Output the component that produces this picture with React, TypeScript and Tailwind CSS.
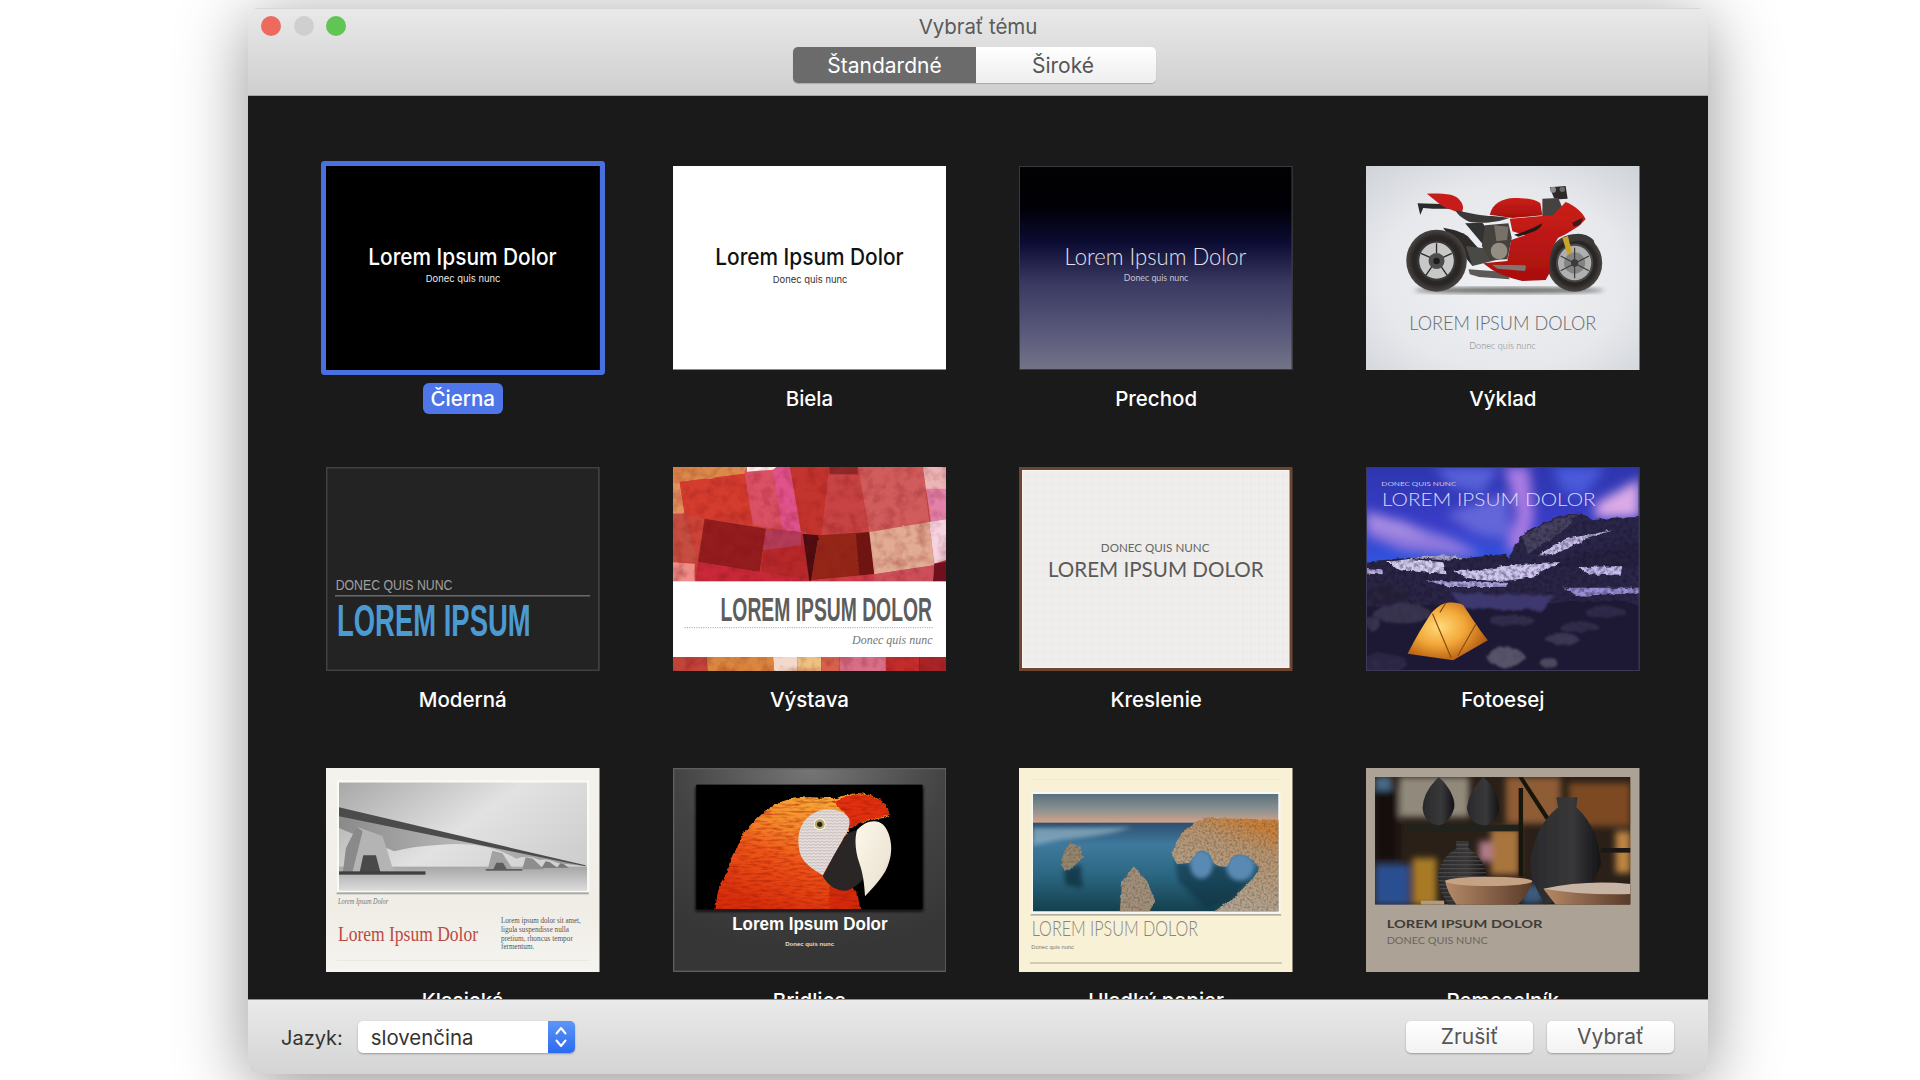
import React, { useLayoutEffect, useRef } from "react";

const VB = "0 0 822 612";
const SANS = "'Liberation Sans', Arial, sans-serif";
const INTER = "Inter, 'Liberation Sans', sans-serif";
const SERIF = "'Liberation Serif', serif";
const LATO = "Lato, 'Liberation Sans', sans-serif";

type TP = { x: number; y: number; w: number; s: number; f: string; ff?: string; fw?: number | string; it?: boolean; children: string };
/* slide text: squeezed horizontally at run time so that it spans the measured width of the original */
function T({ x, y, w, s, f, ff = SANS, fw = 400, it, children }: TP) {
  const ref = useRef<SVGTextElement>(null);
  useLayoutEffect(() => {
    const el = ref.current;
    if (!el) return;
    const n = el.getComputedTextLength();
    el.setAttribute("transform", `translate(${x} ${y}) scale(${w / n} 1)`);
  }, [x, y, w]);
  return (
    <text ref={ref} transform={`translate(${x} ${y})`} fontSize={s} fill={f} fontFamily={ff} fontWeight={fw} fontStyle={it ? "italic" : "normal"}>
      {children}
    </text>
  );
}

function Svg({ children }: { children: React.ReactNode }) {
  return (
    <svg viewBox={VB} preserveAspectRatio="none" className="block w-full h-full">
      {children}
    </svg>
  );
}

function Blur({ id, d }: { id: string; d: number }) {
  return (
    <filter id={id} x="-20%" y="-20%" width="140%" height="140%">
      <feGaussianBlur stdDeviation={d} />
    </filter>
  );
}

/* rough edges + mottled spots + softening, for the photographic parts */
type RP = { id: string; f1?: string; s?: number; f2?: string; rgb?: [number, number, number]; k?: number; off?: number; b?: number; seed?: number };
function Rough({ id, f1 = "0.035", s = 10, f2 = "0.06", rgb = [0, 0, 0], k = 1.5, off = -0.6, b = 1.2, seed = 3 }: RP) {
  return (
    <filter id={id} x="-5%" y="-5%" width="110%" height="110%" colorInterpolationFilters="sRGB">
      <feTurbulence type="fractalNoise" baseFrequency={f1} numOctaves={3} seed={seed} result="n1" />
      <feDisplacementMap in="SourceGraphic" in2="n1" scale={s} xChannelSelector="R" yChannelSelector="G" result="d" />
      <feTurbulence type="fractalNoise" baseFrequency={f2} numOctaves={3} seed={seed + 5} result="n2" />
      <feColorMatrix in="n2" values={`0 0 0 0 ${rgb[0]}  0 0 0 0 ${rgb[1]}  0 0 0 0 ${rgb[2]}  0 0 0 ${k} ${off}`} result="sp" />
      <feComposite in="sp" in2="d" operator="in" result="c" />
      <feMerge result="m">
        <feMergeNode in="d" />
        <feMergeNode in="c" />
      </feMerge>
      <feGaussianBlur in="m" stdDeviation={b} />
    </filter>
  );
}

function Cierna() {
  return (
    <Svg>
      <rect width="822" height="612" fill="#000" />
      <T x={127} y={297} w={566} s={68} f="#fff" ff={INTER} fw={500}>Lorem Ipsum Dolor</T>
      <T x={300} y={347} w={224} s={28} f="#e8e8e8" ff={INTER}>Donec quis nunc</T>
    </Svg>
  );
}

function Biela() {
  return (
    <Svg>
      <rect width="822" height="612" fill="#fff" />
      <rect y="609" width="822" height="3" fill="#8a8a8a" />
      <T x={127} y={297} w={566} s={68} f="#111" ff={INTER} fw={500}>Lorem Ipsum Dolor</T>
      <T x={300} y={352} w={224} s={28} f="#333" ff={INTER}>Donec quis nunc</T>
    </Svg>
  );
}

function Prechod() {
  return (
    <Svg>
      <defs>
        <linearGradient id="pg" x1="0" y1="0" x2="0" y2="1">
          <stop offset="0" stopColor="#020204" />
          <stop offset="0.2" stopColor="#000006" />
          <stop offset="0.38" stopColor="#0c0c34" />
          <stop offset="0.58" stopColor="#3a3a62" />
          <stop offset="0.8" stopColor="#57577a" />
          <stop offset="1" stopColor="#747488" />
        </linearGradient>
      </defs>
      <rect width="822" height="612" fill="url(#pg)" />
      <rect x="1" y="1" width="820" height="610" fill="none" stroke="#3a3a3e" strokeWidth="4" />
      <T x={137} y={297} w={546} s={68} f="#e2e2ea" ff={LATO} fw={300}>Lorem Ipsum Dolor</T>
      <T x={315} y={346} w={194} s={27} f="#c4c4d2" ff={LATO} fw={400}>Donec quis nunc</T>
    </Svg>
  );
}

function Vyklad() {
  return (
    <Svg>
      <defs>
        <radialGradient id="vg" cx="0.5" cy="0.55" r="0.75">
          <stop offset="0" stopColor="#f0f1f4" />
          <stop offset="0.6" stopColor="#e6e8ec" />
          <stop offset="1" stopColor="#cfd2d7" />
        </radialGradient>
        <linearGradient id="vr" x1="0" y1="0" x2="0" y2="1">
          <stop offset="0" stopColor="#cc1f1a" />
          <stop offset="1" stopColor="#a80f0e" />
        </linearGradient>
        <radialGradient id="vt" cx="0.5" cy="0.5" r="0.5">
          <stop offset="0" stopColor="#3c3837" />
          <stop offset="0.78" stopColor="#2a2625" />
          <stop offset="1" stopColor="#4a4644" />
        </radialGradient>
        <Blur id="vb1" d={7} />
        <Blur id="vb2" d={1.7} />
      </defs>
      <rect width="822" height="612" fill="url(#vg)" />
      <ellipse cx="430" cy="373" rx="285" ry="9" fill="#666" filter="url(#vb1)" />
      <g filter="url(#vb2)">
        <path d="M155 112 L225 114 L262 128 L200 128 L172 126 L163 147 Z" fill="#2a2a2a" />
        <path d="M232 185 C262 190 290 198 305 210 L345 255 L320 300 L262 230 Z" fill="#2e2b29" />
        <path d="M298 172 L350 170 L395 230 L360 245 Z" fill="#333130" />
        <path d="M300 240 L380 250 L400 280 L320 300 Z" fill="#4a4844" />
        <ellipse cx="212" cy="284" rx="91" ry="93" fill="url(#vt)" />
        <ellipse cx="212" cy="284" rx="58" ry="60" fill="#3a3838" />
        <ellipse cx="212" cy="284" rx="52" ry="54" fill="#c8c8c8" />
        <g stroke="#2c2c2c" strokeWidth="4">
          <line x1="212" y1="232" x2="212" y2="262" />
          <line x1="165" y1="262" x2="194" y2="275" />
          <line x1="258" y1="262" x2="230" y2="275" />
          <line x1="180" y1="328" x2="198" y2="302" />
          <line x1="244" y1="328" x2="226" y2="302" />
        </g>
        <circle cx="212" cy="285" r="24" fill="#4e4e4e" />
        <circle cx="212" cy="285" r="10" fill="#1e1e1e" />
        <ellipse cx="627" cy="291" rx="83" ry="86" fill="url(#vt)" />
        <ellipse cx="627" cy="291" rx="56" ry="58" fill="#484646" />
        <ellipse cx="627" cy="291" rx="50" ry="52" fill="#b0b0b0" />
        <circle cx="627" cy="291" r="32" fill="#848484" />
        <g stroke="#3a3a3a" strokeWidth="3.5">
          <line x1="627" y1="245" x2="627" y2="337" />
          <line x1="585" y1="270" x2="670" y2="314" />
          <line x1="585" y1="314" x2="670" y2="270" />
        </g>
        <circle cx="627" cy="291" r="11" fill="#3a3a3a" />
        <path d="M600 212 Q650 190 684 222 L692 250 Q660 215 615 228 Z" fill="#3a3838" />
        <path d="M590 215 L607 210 L620 262 L606 266 Z" fill="#c9a42c" />
        <path d="M308 310 L420 318 L432 340 L340 333 L312 325 Z" fill="#5c5a58" />
        <path d="M552 64 L600 60 L606 98 L580 100 L565 96 Z" fill="#2e2c2c" />
        <circle cx="562" cy="71" r="9" fill="#8e8e8e" />
        <circle cx="590" cy="70" r="8" fill="#6a6a6a" />
        <path d="M530 98 L578 96 L590 125 L570 152 L530 150 Z" fill="#454240" />
        <path d="M183 83 C210 82 235 83 255 86 C278 92 290 108 292 125 L288 142 C255 132 235 125 222 115 Z" fill="#c81f1a" />
        <path d="M268 132 C310 142 350 150 380 150 L432 155 C390 172 340 172 310 167 C285 155 275 145 268 132 Z" fill="#3c3937" />
        <path d="M372 146 C380 112 410 97 445 96 C485 96 510 100 524 112 L530 148 L440 156 Z" fill="url(#vr)" />
        <path d="M432 158 L528 150 L562 148 L600 108 C630 120 652 140 660 160 L640 180 L600 205 L578 215 C560 240 552 262 552 300 L552 320 L540 342 L470 345 C430 335 400 325 380 312 L352 292 L425 285 L436 222 L478 208 L440 196 Z" fill="url(#vr)" />
        <path d="M445 206 Q490 195 530 172 Q525 190 500 198 L458 212 Z" fill="#1f1a1a" />
        <path d="M620 170 L652 155 L645 175 L625 182 Z" fill="#3a1a1a" />
        <path d="M358 178 L428 172 L438 215 L425 280 L372 282 L348 240 Z" fill="#45423e" />
        <circle cx="400" cy="255" r="25" fill="#948e82" />
        <path d="M385 178 L428 182 L424 222 L392 226 Z" fill="#77716a" />
        <path d="M378 296 L482 298 L478 315 L395 308 Z" fill="#807470" />
      </g>
      <T x={130} y={493} w={562} s={58} f="#66686c" ff={LATO} fw={300}>LOREM IPSUM DOLOR</T>
      <T x={310} y={549} w={200} s={28} f="#808286" ff={LATO} fw={300}>Donec quis nunc</T>
    </Svg>
  );
}

function Moderna() {
  return (
    <Svg>
      <rect width="822" height="612" fill="#232323" />
      <rect x="2" y="2" width="818" height="608" fill="none" stroke="#414141" strokeWidth="5" />
      <T x={29} y={370} w={351} s={46} f="#a0a0a0">DONEC QUIS NUNC</T>
      <rect x="27" y="385" width="767" height="3" fill="#8d8d8d" />
      <T x={33} y={507} w={582} s={132} f="#4b9ad2" fw={700}>LOREM IPSUM</T>
    </Svg>
  );
}

function Vystava() {
  const P = (pts: string, fill: string) => <polygon points={pts} fill={fill} />;
  return (
    <Svg>
      <defs>
        <Rough id="sb" f1="0.02" s={5} f2="0.03" rgb={[0.5, 0.06, 0.08]} k={0.7} off={-0.3} b={1.8} />
      </defs>
      <g filter="url(#sb)">
        <rect x="-10" y="-10" width="842" height="370" fill="#cc4438" />
        {P("-10,-10 225,-10 215,20 20,45 -10,50", "#dc8a4c")}
        {P("-10,50 20,45 35,140 -10,140", "#e2925e")}
        {P("20,45 215,20 240,175 95,155 35,140", "#d43c2e")}
        {P("215,10 350,-10 385,195 240,175", "#da5064")}
        {P("300,8 350,-10 385,195 330,190", "#e0528c")}
        {P("350,-10 470,-10 470,20 445,205 385,195", "#c4342e")}
        {P("470,-10 555,-10 555,15 590,195 445,220", "#c84444")}
        {P("470,-10 555,-10 555,22 470,22", "#8e2a2a")}
        {P("555,-10 750,-10 770,165 590,195", "#d05c5c")}
        {P("750,-10 832,-10 832,155 775,165", "#e282aa")}
        {P("750,-10 832,5 832,65 760,65", "#ecb6b6")}
        {P("222,-10 325,-10 300,8 222,14", "#f8f0e8")}
        {P("-10,140 35,140 75,285 -10,285", "#c64e40")}
        {P("95,155 280,185 260,315 75,285", "#921c1e")}
        {P("280,185 390,200 410,340 262,315", "#b6282a")}
        {P("280,185 385,195 385,235 270,250", "#b23c58")}
        {P("390,200 438,205 415,345 410,345", "#4a0c10")}
        {P("438,205 590,195 605,322 415,340", "#942618")}
        {P("550,200 590,195 605,320 560,325", "#6e1512")}
        {P("590,195 770,165 785,295 605,322", "#e2ac94")}
        {P("770,165 832,155 832,275 785,290", "#f4d4e0")}
        {P("785,290 832,282 832,360 780,360", "#701020")}
        {P("605,322 785,295 780,360 600,360", "#cc505c")}
        {P("-10,285 65,290 65,360 -10,360", "#ee8f88")}
        {P("75,285 260,315 410,340 410,360 65,360", "#c8283a")}
        {P("415,340 605,322 600,360 410,360", "#d03c4a")}
        {P("-10,565 100,565 105,622 -10,622", "#c2453a")}
        {P("100,565 300,565 305,622 105,622", "#d9873f")}
        {P("300,565 375,565 375,622 305,622", "#f2d9c9")}
        {P("375,565 445,565 445,622 375,622", "#edc180")}
        {P("445,565 500,565 500,622 445,622", "#d5634c")}
        {P("500,565 640,565 640,622 500,622", "#d9708a")}
        {P("640,565 740,565 740,622 640,622", "#c22c2c")}
        {P("740,565 832,565 832,622 740,622", "#a82426")}
      </g>
      <rect y="343" width="822" height="227" fill="#fff" />
      <T x={143} y={462} w={635} s={98} f="#5d5d5d" fw={700}>LOREM IPSUM DOLOR</T>
      <line x1="35" y1="482" x2="782" y2="482" stroke="#9a9a9a" strokeWidth="3" strokeDasharray="3 4" />
      <T x={538} y={530} w={242} s={38} f="#77777a" ff={SERIF} it>Donec quis nunc</T>
    </Svg>
  );
}

function Kreslenie() {
  return (
    <Svg>
      <defs>
        <pattern id="kp" width="24" height="24" patternUnits="userSpaceOnUse">
          <path d="M24 0H0V24" fill="none" stroke="#e2e0dc" strokeWidth="1.5" />
        </pattern>
      </defs>
      <rect width="822" height="612" fill="#6d4632" />
      <rect x="9" y="9" width="804" height="594" fill="#f6f5f1" />
      <rect x="12" y="12" width="798" height="588" fill="#efeeec" />
      <rect x="12" y="12" width="798" height="588" fill="url(#kp)" />
      <T x={246} y={254} w={326} s={33} f="#666664" ff={LATO}>DONEC QUIS NUNC</T>
      <T x={87} y={331} w={648} s={62} f="#5a5a58" ff={LATO}>LOREM IPSUM DOLOR</T>
    </Svg>
  );
}

function Fotoesej() {
  const P = (d: string, fill: string) => <path d={d} fill={fill} />;
  return (
    <Svg>
      <defs>
        <linearGradient id="fs" x1="0" y1="0" x2="0" y2="1">
          <stop offset="0" stopColor="#2d36ae" />
          <stop offset="0.6" stopColor="#3a3dc8" />
          <stop offset="1" stopColor="#2f55df" />
        </linearGradient>
        <radialGradient id="ft" cx="0.4" cy="0.42" r="0.62">
          <stop offset="0" stopColor="#ffdb7c" />
          <stop offset="0.5" stopColor="#f2a838" />
          <stop offset="1" stopColor="#b45a12" />
        </radialGradient>
        <Blur id="f1" d={16} />
        <Blur id="f3" d={2} />
        <Rough id="f2" f1="0.05" s={14} f2="0.08" rgb={[0.09, 0.07, 0.18]} k={1.2} off={-0.48} b={1.3} />
        <Rough id="f4" f1="0.03" s={18} f2="0.05" rgb={[0.26, 0.24, 0.38]} k={0.8} off={-0.34} b={3} />
      </defs>
      <rect width="822" height="290" fill="url(#fs)" />
      <g filter="url(#f1)">
        {P("M0 130 L260 215 L345 262 L290 268 L110 250 L0 205 Z", "#8f78de")}
        {P("M0 140 L120 165 L190 215 L90 200 L0 175 Z", "#a88ee2")}
        {P("M415 0 L490 0 L505 150 L480 245 L420 255 L455 140 Z", "#a97ce2")}
        {P("M205 0 L400 0 L350 80 L260 60 Z", "#5660d8")}
        {P("M690 110 L822 35 L822 150 L690 152 Z", "#dcaae6")}
        {P("M560 0 L720 0 L650 90 L590 70 Z", "#4a5ada")}
        {P("M240 140 L420 80 L440 220 L330 200 Z", "#6466d8")}
      </g>
      <rect x="0" y="290" width="822" height="322" fill="#1d1934" />
      <g filter="url(#f2)">
        <path d="M435 262 C450 235 465 205 490 190 C530 170 570 150 610 142 L645 140 L682 160 L740 152 L830 150 L830 420 L430 300 Z" fill="#2a2648" />
        <path d="M470 210 C520 175 570 152 640 142 L600 185 L530 235 L485 262 Z" fill="#47425f" />
        {P("M-10 285 L130 272 L220 265 L310 272 L420 260 L445 290 L600 290 L830 400 L-10 420 Z", "#2a2445")}
        {P("M530 300 C600 270 700 240 830 225 L830 300 L700 300 Z", "#26213f")}
        {P("M60 285 L130 276 L232 286 L242 322 L100 310 Z", "#d4cef0")}
        {P("M130 272 L230 264 L310 272 L230 280 Z", "#a8a4ca")}
        {P("M262 312 L330 292 L440 292 L585 285 L500 330 L400 345 L300 332 Z", "#d0c8f0")}
        {P("M250 282 L420 264 L445 290 L340 312 L280 304 Z", "#2a2544")}
        {P("M520 262 L600 216 L742 190 L660 216 L565 262 Z", "#c8c0ea")}
        {P("M640 300 L770 298 L765 326 L670 322 Z", "#c4bcee")}
        {P("M-10 305 L50 310 L50 322 L-10 320 Z", "#b8b0dc")}
        {P("M180 340 L430 350 L420 360 L250 360 Z", "#aea6de")}
        {P("M590 362 L830 362 L830 378 L640 386 Z", "#9890d4")}
      </g>
      <g filter="url(#f4)">
        {P("M250 378 L565 384 L530 432 L300 424 Z", "#3d3870")}
        <ellipse cx="110" cy="440" rx="85" ry="30" fill="#37324c" />
        <ellipse cx="60" cy="385" rx="70" ry="28" fill="#231e35" />
        <ellipse cx="590" cy="515" rx="50" ry="18" fill="#3a3652" />
        <ellipse cx="640" cy="480" rx="60" ry="15" fill="#2e2a48" />
        <ellipse cx="720" cy="435" rx="60" ry="16" fill="#2c2846" />
        <ellipse cx="420" cy="570" rx="55" ry="32" fill="#575368" />
        <ellipse cx="440" cy="460" rx="70" ry="16" fill="#2f2b48" />
        <ellipse cx="550" cy="590" rx="22" ry="14" fill="#4c485e" />
        <ellipse cx="45" cy="590" rx="80" ry="30" fill="#2a2542" />
        <ellipse cx="20" cy="470" rx="22" ry="20" fill="#35304a" />
      </g>
      <g filter="url(#f3)">
        <path d="M125 560 C150 510 175 470 195 440 C210 422 225 410 245 407 C265 405 282 408 292 414 C310 440 335 480 366 520 L262 580 Z" fill="url(#ft)" />
        <path d="M200 440 L256 572 M330 472 L276 566 M240 408 L222 436" stroke="#8a4a12" strokeWidth="3.5" fill="none" />
      </g>
      <T x={46} y={56} w={225} s={19} f="#c6c6ee" ff={LATO}>DONEC QUIS NUNC</T>
      <T x={48} y={117} w={642} s={50} f="#dcdcf2" ff={LATO} fw={300}>LOREM IPSUM DOLOR</T>
      <rect x="1" y="1" width="820" height="610" fill="none" stroke="#3a3a58" strokeWidth="4" />
    </Svg>
  );
}

function Klasicka() {
  return (
    <Svg>
      <defs>
        <linearGradient id="ks" x1="0" y1="0" x2="1" y2="0.6">
          <stop offset="0" stopColor="#a8a8a8" />
          <stop offset="0.55" stopColor="#e2e2e2" />
          <stop offset="1" stopColor="#cfcfcf" />
        </linearGradient>
        <linearGradient id="kw" x1="0" y1="0" x2="0" y2="1">
          <stop offset="0" stopColor="#a6a6a6" />
          <stop offset="1" stopColor="#dcdcdc" />
        </linearGradient>
        <linearGradient id="kb" x1="0" y1="0" x2="1" y2="0">
          <stop offset="0" stopColor="#8a8a8a" />
          <stop offset="0.55" stopColor="#bcbcbc" />
          <stop offset="1" stopColor="#8e8e8e" />
        </linearGradient>
        <linearGradient id="kbg" x1="0" y1="0" x2="0" y2="1">
          <stop offset="0" stopColor="#f4f2ed" />
          <stop offset="0.7" stopColor="#f0ede7" />
          <stop offset="1" stopColor="#f6f4ef" />
        </linearGradient>
        <clipPath id="kc"><rect x="39" y="43" width="746" height="325" /></clipPath>
        <Blur id="kb1" d={1.6} />
      </defs>
      <rect width="822" height="612" fill="url(#kbg)" />
      <rect x="33" y="37" width="758" height="337" fill="#fbfaf7" />
      <rect x="32" y="373" width="758" height="6" fill="#a9a8a4" />
      <g clipPath="url(#kc)">
        <rect x="39" y="43" width="746" height="325" fill="url(#ks)" />
        <rect x="39" y="296" width="746" height="72" fill="url(#kw)" />
        <g filter="url(#kb1)">
          <path d="M39 135 L780 294 L700 286 Q665 270 642 276 Q605 258 572 272 Q480 218 345 230 Q262 234 205 250 L39 180 Z" fill="url(#kb)" />
          <path d="M39 118 L780 292 L780 295 L39 145 Z" fill="#4c4c4c" />
          <path d="M92 176 L170 204 L206 318 L50 318 Z" fill="#b4b4b4" />
          <path d="M60 240 L92 176 L110 190 L78 318 L50 318 Z" fill="#8a8a8a" />
          <path d="M112 262 L150 262 L165 318 L100 318 Z" fill="#484848" />
          <path d="M500 248 L530 256 L565 308 L485 308 Z" fill="#a2a2a2" />
          <path d="M512 284 L532 284 L545 306 L502 306 Z" fill="#5c5c5c" />
          <path d="M600 268 L622 272 L655 304 L590 304 Z" fill="#8e8e8e" />
          <path d="M660 280 L672 282 L696 300 L648 300 Z" fill="#7c7c7c" />
          <path d="M704 286 L714 288 L730 299 L695 299 Z" fill="#777" />
          <rect x="39" y="310" width="260" height="10" fill="#404040" />
          <rect x="480" y="303" width="110" height="5" fill="#5c5c5c" />
        </g>
      </g>
      <T x={36} y={408} w={151} s={22} f="#777" ff={SERIF} it>Lorem Ipsum Dolor</T>
      <T x={36} y={518} w={421} s={66} f="#b84c42" ff={SERIF}>Lorem Ipsum Dolor</T>
      <T x={526} y={466} w={240} s={22} f="#555" ff={SERIF}>Lorem ipsum dolor sit amet,</T>
      <T x={526} y={493} w={204} s={22} f="#555" ff={SERIF}>ligula suspendisse nulla</T>
      <T x={526} y={519} w={216} s={22} f="#555" ff={SERIF}>pretium, rhoncus tempor</T>
      <T x={526} y={544} w={100} s={22} f="#555" ff={SERIF}>fermentum.</T>
      <rect x="32" y="576" width="762" height="2" fill="#e8e5df" />
    </Svg>
  );
}

function Bridlica() {
  return (
    <Svg>
      <defs>
        <radialGradient id="bg" cx="0.5" cy="0" r="0.9">
          <stop offset="0" stopColor="#767676" />
          <stop offset="0.55" stopColor="#434343" />
          <stop offset="1" stopColor="#363636" />
        </radialGradient>
        <linearGradient id="bo" gradientUnits="userSpaceOnUse" x1="400" y1="90" x2="300" y2="424">
          <stop offset="0" stopColor="#f7a636" />
          <stop offset="0.3" stopColor="#f5862a" />
          <stop offset="0.55" stopColor="#ee5518" />
          <stop offset="1" stopColor="#d92e0c" />
        </linearGradient>
        <linearGradient id="bk" x1="0" y1="0" x2="1" y2="1">
          <stop offset="0" stopColor="#fdf8ec" />
          <stop offset="0.7" stopColor="#eee6d6" />
          <stop offset="1" stopColor="#b8b2a4" />
        </linearGradient>
        <pattern id="bp" width="13" height="9" patternUnits="userSpaceOnUse">
          <path d="M0 7 Q6.5 0 13 7" fill="none" stroke="#988886" strokeWidth="2" />
        </pattern>
        <Rough id="br" f1="0.07" s={14} f2="0.03 0.14" rgb={[0.62, 0.1, 0.02]} k={1.2} off={-0.5} b={1.6} />
        <Blur id="b1" d={1.2} />
        <Blur id="bs" d={5} />
        <clipPath id="bc"><rect x="70" y="50" width="680" height="374" /></clipPath>
      </defs>
      <rect width="822" height="612" fill="url(#bg)" />
      <rect x="2" y="2" width="818" height="608" fill="none" stroke="#5f5f5f" strokeWidth="4" />
      <rect x="68" y="56" width="684" height="374" fill="#111" filter="url(#bs)" />
      <rect x="70" y="50" width="680" height="374" fill="#000" />
      <g clipPath="url(#bc)">
        <g filter="url(#br)">
          <path d="M125 440 C135 385 130 350 165 315 C165 280 195 240 215 190 C250 150 290 115 330 100 C380 80 450 90 490 90 C530 78 560 68 600 85 C635 100 650 120 648 140 C640 155 600 150 575 160 C545 170 530 185 520 200 L470 340 L560 440 Z" fill="url(#bo)" />
          <path d="M480 100 C520 85 560 68 605 88 C640 100 652 125 645 142 C620 155 590 150 570 160 C550 170 535 180 525 190 C530 150 510 120 480 100 Z" fill="#e2300f" />
          <path d="M470 340 C500 365 540 360 553 365 L565 440 L470 440 Z" fill="#d42a0c" />
        </g>
        <g filter="url(#b1)">
          <path d="M378 200 C385 160 410 135 450 125 C490 120 525 135 530 155 C532 175 525 190 515 205 C495 245 470 285 450 322 C420 305 395 285 385 265 C378 245 375 225 378 200 Z" fill="#e6dedd" />
          <path d="M378 200 C385 160 410 135 450 125 C490 120 525 135 530 155 C532 175 525 190 515 205 C495 245 470 285 450 322 C420 305 395 285 385 265 C378 245 375 225 378 200 Z" fill="url(#bp)" opacity="0.6" />
          <path d="M520 200 C535 190 550 187 556 186 C548 215 555 260 578 312 C575 335 560 350 530 365 C505 375 470 360 450 325 C470 285 495 240 520 200 Z" fill="#2a2828" />
          <path d="M553 186 C575 160 610 150 632 170 C655 195 662 240 650 280 C640 320 610 350 577 385 C575 350 572 320 560 285 C548 250 545 215 553 186 Z" fill="url(#bk)" />
          <circle cx="441" cy="169" r="18" fill="#fff8e8" />
          <circle cx="441" cy="169" r="15" fill="#b8a868" />
          <circle cx="441" cy="169" r="8" fill="#2a2418" />
        </g>
      </g>
      <T x={178} y={487} w={467} s={54} f="#fff" fw={700}>Lorem Ipsum Dolor</T>
      <T x={337} y={533} w={147} s={18} f="#dedede" fw={700}>Donec quis nunc</T>
    </Svg>
  );
}

function Papier() {
  return (
    <Svg>
      <defs>
        <linearGradient id="hs" x1="0" y1="0" x2="0" y2="1">
          <stop offset="0" stopColor="#59717f" />
          <stop offset="0.55" stopColor="#8d9291" />
          <stop offset="1" stopColor="#d8a488" />
        </linearGradient>
        <linearGradient id="hw" x1="0" y1="0" x2="0" y2="1">
          <stop offset="0" stopColor="#2d4f70" />
          <stop offset="0.25" stopColor="#3f7a9e" />
          <stop offset="0.6" stopColor="#2a6580" />
          <stop offset="1" stopColor="#143f4c" />
        </linearGradient>
        <linearGradient id="hc" gradientUnits="userSpaceOnUse" x1="660" y1="150" x2="570" y2="400">
          <stop offset="0" stopColor="#c8803a" />
          <stop offset="0.28" stopColor="#b69470" />
          <stop offset="1" stopColor="#b2a694" />
        </linearGradient>
        <clipPath id="hcp"><rect x="42" y="78" width="738" height="352" /></clipPath>
        <Rough id="hb" f1="0.05" s={8} f2="0.14" rgb={[0.28, 0.22, 0.16]} k={1} off={-0.42} b={1.1} />
        <Blur id="hb2" d={6} />
      </defs>
      <rect width="822" height="612" fill="#f8f1d6" />
      <rect x="38" y="34" width="746" height="2" fill="#f0e8cc" />
      <rect x="38" y="72" width="748" height="364" fill="#f8f8f2" />
      <g clipPath="url(#hcp)">
        <rect x="42" y="78" width="738" height="88" fill="url(#hs)" />
        <rect x="42" y="164" width="738" height="268" fill="url(#hw)" />
        <path d="M42 180 L340 178 Q260 205 130 215 L42 232 Z" fill="#9cbccb" opacity="0.65" filter="url(#hb2)" />
        <path d="M135 305 L185 290 L190 360 L140 350 Z" fill="#0c2c38" opacity="0.7" filter="url(#hb2)" />
        <path d="M470 285 L720 300 L640 400 L560 420 L480 340 Z" fill="#0c2e3c" opacity="0.55" filter="url(#hb2)" />
        <ellipse cx="548" cy="290" rx="34" ry="42" fill="#5a8ab4" filter="url(#hb2)" />
        <ellipse cx="665" cy="298" rx="42" ry="40" fill="#5a8ab4" filter="url(#hb2)" />
        <g filter="url(#hb)">
          <path d="M460 262 C462 240 480 200 510 178 C530 160 550 150 570 150 L790 156 L790 440 L570 440 C600 420 640 400 660 375 C690 345 715 320 722 300 C700 265 670 248 640 268 L625 295 L612 296 C590 296 580 280 578 268 C565 240 535 240 522 270 L510 285 L475 288 Z" fill="url(#hc)" />
          <path d="M128 270 L150 225 L185 235 L192 270 L160 300 L132 308 Z" fill="#96866e" />
          <path d="M302 440 L310 340 L345 295 L385 340 L410 400 L385 440 Z" fill="#a2907c" />
        </g>
      </g>
      <rect x="35" y="438" width="753" height="5" fill="#b3afa2" />
      <T x={38} y={503} w={500} s={62} f="#85857c" ff={LATO} fw={300}>LOREM IPSUM DOLOR</T>
      <T x={37} y={544} w={128} s={17} f="#7c7c72">Donec quis nunc</T>
      <rect x="33" y="583" width="757" height="4" fill="#bfb8a2" />
    </Svg>
  );
}

function Remeselnik() {
  return (
    <Svg>
      <defs>
        <linearGradient id="rv" x1="0" y1="0" x2="1" y2="0">
          <stop offset="0" stopColor="#2a2a2c" />
          <stop offset="0.6" stopColor="#38383a" />
          <stop offset="1" stopColor="#141416" />
        </linearGradient>
        <linearGradient id="rb" x1="0" y1="0" x2="1" y2="0">
          <stop offset="0" stopColor="#b58a68" />
          <stop offset="1" stopColor="#5a3a28" />
        </linearGradient>
        <clipPath id="rc"><rect x="27" y="27" width="768" height="383" /></clipPath>
        <Blur id="r1" d={10} />
        <Blur id="r2" d={2} />
        <pattern id="rp" width="10" height="12" patternUnits="userSpaceOnUse">
          <rect width="10" height="4" fill="#55514e" opacity="0.7" />
        </pattern>
      </defs>
      <rect width="822" height="612" fill="#aca396" />
      <g clipPath="url(#rc)">
        <rect x="27" y="27" width="768" height="383" fill="#2a2018" />
        <g filter="url(#r1)">
          <rect x="100" y="27" width="210" height="120" fill="#918a7c" />
          <rect x="27" y="60" width="70" height="220" fill="#120f0c" />
          <rect x="27" y="290" width="105" height="120" fill="#2c5090" />
          <rect x="140" y="270" width="72" height="140" fill="#a87a28" />
          <rect x="375" y="180" width="85" height="140" fill="#a8743c" />
          <rect x="420" y="27" width="165" height="140" fill="#8e5c34" />
          <rect x="610" y="45" width="185" height="130" fill="#7c4a24" />
          <rect x="750" y="190" width="45" height="125" fill="#bc8442" />
          <rect x="340" y="220" width="40" height="60" fill="#b07a88" />
          <rect x="470" y="350" width="60" height="55" fill="#3a5a80" />
          <rect x="27" y="27" width="50" height="40" fill="#4a6a8a" />
        </g>
        <g filter="url(#r2)">
          <rect x="125" y="170" width="335" height="20" fill="#24201c" />
          <rect x="459" y="60" width="13" height="265" fill="#17130f" />
          <path d="M458 28 L472 28 L552 150 L540 155 Z" fill="#17130f" />
          <rect x="705" y="240" width="90" height="14" fill="#1e1812" />
          <path d="M218 27 L232 40 Q270 85 265 120 Q250 170 215 172 Q175 165 170 120 Q172 75 208 38 Z" fill="url(#rv)" />
          <path d="M352 27 L366 40 Q402 85 400 125 Q388 172 350 172 Q310 165 303 120 Q310 70 342 38 Z" fill="url(#rv)" />
          <path d="M270 220 L308 220 L308 240 Q362 280 362 330 L280 410 L248 410 Q218 370 216 325 Q222 268 272 242 Z" fill="url(#rv)" />
          <path d="M270 220 L308 220 L308 240 Q362 280 362 330 L280 410 L248 410 Q218 370 216 325 Q222 268 272 242 Z" fill="url(#rp)" />
          <path d="M572 88 L636 88 L632 118 Q700 180 706 290 L680 350 L540 410 Q492 340 494 280 Q510 170 578 118 Z" fill="url(#rv)" />
          <path d="M238 340 Q370 318 500 340 Q490 380 455 410 L272 410 Q245 375 238 340 Z" fill="url(#rb)" />
          <ellipse cx="369" cy="340" rx="131" ry="14" fill="#c6a284" />
          <path d="M533 362 L795 355 L795 410 L570 410 Z" fill="url(#rb)" />
          <path d="M533 362 Q660 335 795 348 L795 378 Q650 382 533 362 Z" fill="#c8b4a4" />
          <rect x="165" y="398" width="70" height="12" fill="#b09a80" />
        </g>
      </g>
      <T x={62} y={480} w={468} s={33} f="#403c38" ff={LATO} fw={700}>LOREM IPSUM DOLOR</T>
      <T x={62} y={527} w={304} s={27} f="#6a655c" ff={LATO}>DONEC QUIS NUNC</T>
    </Svg>
  );
}

const THEMES: { name: string; Art: () => React.ReactElement; sel?: boolean }[] = [
  { name: "Čierna", Art: Cierna, sel: true },
  { name: "Biela", Art: Biela },
  { name: "Prechod", Art: Prechod },
  { name: "Výklad", Art: Vyklad },
  { name: "Moderná", Art: Moderna },
  { name: "Výstava", Art: Vystava },
  { name: "Kreslenie", Art: Kreslenie },
  { name: "Fotoesej", Art: Fotoesej },
  { name: "Klasická", Art: Klasicka },
  { name: "Bridlica", Art: Bridlica },
  { name: "Hladký papier", Art: Papier },
  { name: "Remeselník", Art: Remeselnik },
];

export default function App() {
  return (
    <div className="w-[1920px] h-[1080px] bg-white overflow-hidden pl-[248px] pt-[8px] font-['Inter',sans-serif]">
      <div className="w-[1460px] h-[1066px] rounded-[9px] flex flex-col shadow-[0_12px_70px_rgba(0,0,0,0.42)] overflow-hidden">
        <div className="h-[88px] shrink-0 relative flex flex-col items-center pt-[8px] bg-gradient-to-b from-[#e9e9e9] to-[#cfcfcf] border-t border-[#d6d6d6] border-b-[#a6a6a6] border-b">
          <div className="absolute left-[13px] top-[7px] flex gap-[12.5px]">
            <span className="w-[20px] h-[20px] rounded-full bg-[#ec6a5e]" />
            <span className="w-[20px] h-[20px] rounded-full bg-[#cfcfcf]" />
            <span className="w-[20px] h-[20px] rounded-full bg-[#61c554]" />
          </div>
          <div className="text-[20.5px] leading-[20px] tracking-[-0.1px] text-[#5a5a5a]">Vybrať tému</div>
          <div className="mt-[10px] ml-[-7px] flex h-[36px] w-[363px] rounded-[5px] overflow-hidden shadow-[0_1px_1px_rgba(0,0,0,0.2)] text-[21px]">
            <div className="w-[183px] flex items-center justify-center pt-[2px] bg-[#6b6b6b] text-white">Štandardné</div>
            <div className="flex-1 flex items-center justify-center pt-[2px] pr-[6px] bg-gradient-to-b from-[#ffffff] to-[#eeeeee] text-[#555]">Široké</div>
          </div>
        </div>

        <div className="flex-1 min-h-0 overflow-hidden bg-[#1a1a1a] pt-[70px] pl-[78px]">
          <div className="grid grid-cols-[repeat(4,273.5px)] gap-x-[73.2px] gap-y-[53px]">
            {THEMES.map(({ name, Art, sel }) => (
              <div key={name} className="flex flex-col items-center">
                <div className={sel ? "w-[273.5px] h-[204px] ring-[5px] ring-[#4a70e0] rounded-[1px]" : "w-[273.5px] h-[204px]"}>
                  <Art />
                </div>
                <div className={sel ? "mt-[13px] h-[31px] w-[80px] pt-[1px] rounded-[6px] bg-[#4f76e8] text-white text-[20.5px] font-medium flex items-center justify-center" : "mt-[13px] h-[31px] pt-[1px] text-white text-[20.5px] font-medium flex items-center justify-center"}>
                  {name}
                </div>
              </div>
            ))}
          </div>
        </div>

        <div className="h-[75px] shrink-0 flex items-center pl-[33px] pr-[34px] bg-gradient-to-b from-[#eaeaea] to-[#d4d4d4] border-t border-[#8e8e8e]">
          <span className="text-[20px] text-[#333] mr-[15px] pt-[2px]">Jazyk:</span>
          <div className="flex w-[217px] h-[32px] rounded-[5px] overflow-hidden shadow-[0_1px_2px_rgba(0,0,0,0.3)]">
            <div className="flex-1 bg-white text-[20.4px] leading-[33px] pl-[13px] text-[#333]">slovenčina</div>
            <div className="w-[27px] bg-gradient-to-b from-[#5e95f6] to-[#2a6af0] flex items-center justify-center">
              <svg width="14" height="24" viewBox="0 0 14 24" fill="none" stroke="#fff" strokeWidth="2" strokeLinecap="round" strokeLinejoin="round">
                <path d="M2.5 8.5 L7 3 L11.5 8.5" />
                <path d="M2.5 15.5 L7 21 L11.5 15.5" />
              </svg>
            </div>
          </div>
          <button className="ml-auto w-[127px] h-[32px] rounded-[5px] bg-gradient-to-b from-[#ffffff] to-[#f2f2f2] text-[21px] text-[#555] shadow-[0_1px_2px_rgba(0,0,0,0.3)]">Zrušiť</button>
          <button className="ml-[14px] w-[127px] h-[32px] rounded-[5px] bg-gradient-to-b from-[#ffffff] to-[#f2f2f2] text-[21px] text-[#555] shadow-[0_1px_2px_rgba(0,0,0,0.3)]">Vybrať</button>
        </div>
      </div>
    </div>
  );
}
